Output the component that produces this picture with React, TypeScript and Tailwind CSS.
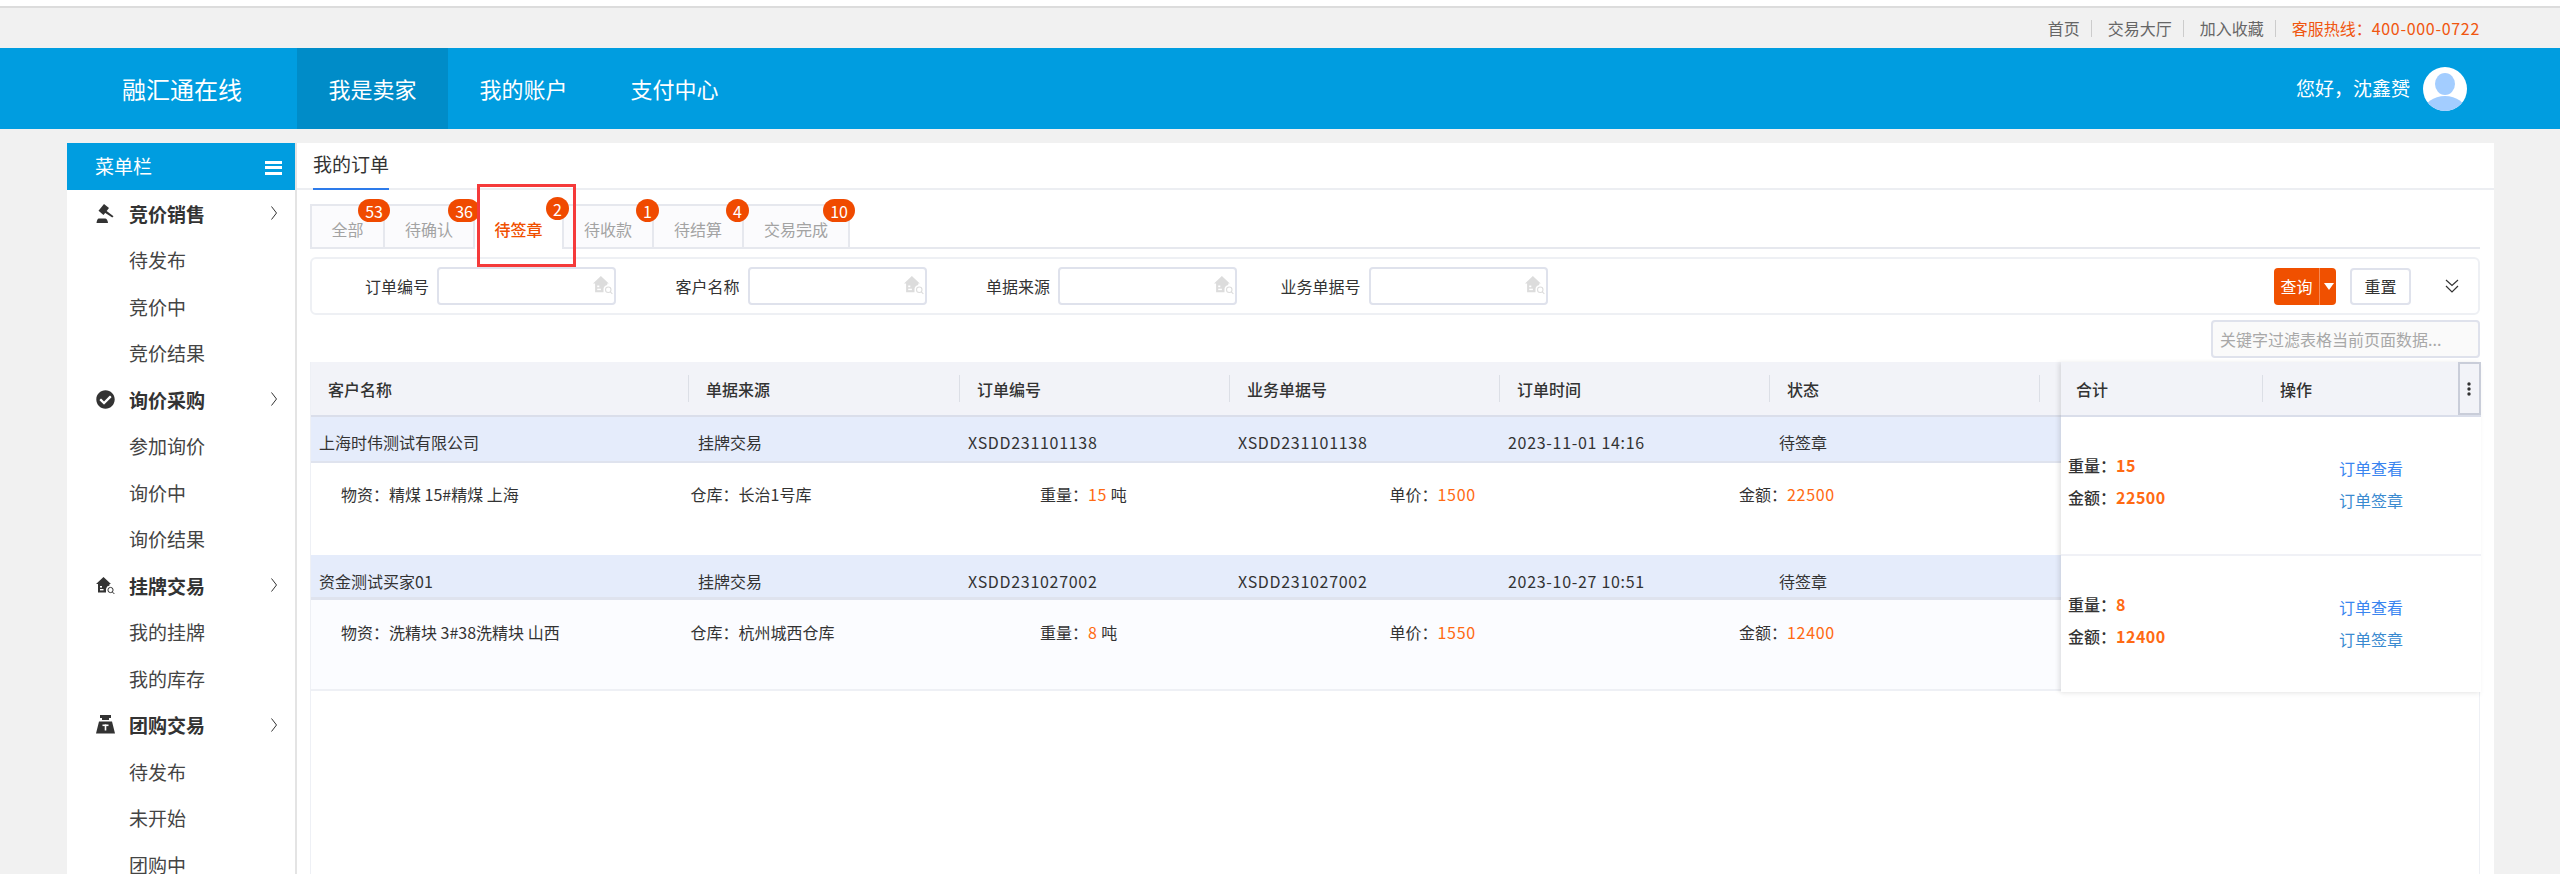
import { FaCheckCircle } from "react-icons/fa";

const menu = [
  { title: "竞价销售", icon: "gavel", items: ["待发布", "竞价中", "竞价结果"] },
  { title: "询价采购", icon: "check", items: ["参加询价", "询价中", "询价结果"] },
  { title: "挂牌交易", icon: "house", items: ["我的挂牌", "我的库存"] },
  { title: "团购交易", icon: "weight", items: ["待发布", "未开始", "团购中"] },
];

const tabs = [
  { label: "全部", count: "53", w: "w-[75px]" },
  { label: "待确认", count: "36", w: "w-[90px]" },
  { label: "待签章", count: "2", w: "w-[89px]", active: true },
  { label: "待收款", count: "1", w: "w-[90px]" },
  { label: "待结算", count: "4", w: "w-[90px]" },
  { label: "交易完成", count: "10", w: "w-[106px]" },
];

const filters = [
  { label: "订单编号" },
  { label: "客户名称" },
  { label: "单据来源" },
  { label: "业务单据号" },
];

const columns = ["客户名称", "单据来源", "订单编号", "业务单据号", "订单时间", "状态", ""];

const orders = [
  {
    customer: "上海时伟测试有限公司",
    no: "XSDD231101138",
    time: "2023-11-01 14:16",
    goods: "精煤 15#精煤 上海",
    store: "长治1号库",
    weight: "15",
    price: "1500",
    amount: "22500",
    head: "h-[46px] pt-[6px] border-b-2",
    body: "h-[92px] pt-[19px] bg-white",
  },
  {
    customer: "资金测试买家01",
    no: "XSDD231027002",
    time: "2023-10-27 10:51",
    goods: "洗精块 3#38洗精块 山西",
    store: "杭州城西仓库",
    weight: "8",
    price: "1550",
    amount: "12400",
    head: "h-[45px] pt-[9px] border-b-[3px]",
    body: "h-[91px] pt-[20px] bg-[#fbfcff] border-b-2 border-[#eef0f5]",
  },
];

function HouseSearch({ color, className }: { color: string; className: string }) {
  return (
    <svg viewBox="0 0 19 19" className={className} fill={color}>
      <path d="M7.5 1 L15 8 L13.5 8 L13.5 9.6 A4.2 4.2 0 0 0 10 13 L10 16.5 L2 16.5 L2 8 L0 8 Z" />
      <rect x="4" y="10" width="2" height="1.6" fill="#fff" />
      <rect x="4" y="13" width="3.5" height="1.4" fill="#fff" />
      <circle cx="14.5" cy="14" r="2.6" fill="none" stroke={color} strokeWidth="1" />
      <path d="M16.4 16 L18.4 18" stroke={color} strokeWidth="1" />
    </svg>
  );
}

function MenuIcon({ name }: { name: string }) {
  if (name === "gavel")
    return (
      <svg viewBox="0 0 19 19" className="h-[19px] w-[19px]" fill="#333">
        <path d="M8 0 L13 4 L7.5 11 L2.5 6.8 Z" />
        <path d="M10 6.6 L17.5 12.2 L16.3 13.6 L8.6 8.6 Z" />
        <path d="M2.5 14.5 H9.5 Q11.5 15 12 19 H0.5 Q1 15 2.5 14.5 Z" />
      </svg>
    );
  if (name === "check") return <FaCheckCircle className="h-[19px] w-[19px] text-[#333]" />;
  if (name === "house") return <HouseSearch color="#333" className="h-[19px] w-[19px]" />;
  return (
    <svg viewBox="0 0 19 19" className="h-[19px] w-[19px]" fill="#333">
      <path d="M4 0 H15 V3 H13 V5 H6 V3 H4 Z" />
      <path d="M3 6.5 H16 L19 18.5 H0 Z" />
      <rect x="6.5" y="9.5" width="6" height="1.6" fill="#fff" />
      <rect x="8.7" y="9.5" width="1.6" height="6" fill="#fff" />
    </svg>
  );
}

function Chevron() {
  return (
    <svg viewBox="0 0 6 14" className="h-[14px] w-[6px]" fill="none" stroke="#333" strokeWidth="1">
      <path d="M0.5 0.5 L5.5 7 L0.5 13.5" />
    </svg>
  );
}

export default function App() {
  return (
    <div
      className="h-[874px] w-[2560px] overflow-hidden bg-[#f1f1f1] text-[16px] text-[#333] relative"
      style={{ fontFamily: '"Noto Sans CJK SC", "Noto Sans", sans-serif' }}
    >
      <div className="h-[6px] bg-white" />
      <div className="h-[2px] bg-[#dcdcdc]" />

      {/* top links */}
      <div className="flex h-[40px] items-center justify-end pr-[80px] text-[#666]">
        <span>首页</span>
        <span className="ml-[11px] mr-[16px] h-[17px] w-px bg-[#ccc]" />
        <span>交易大厅</span>
        <span className="ml-[11px] mr-[16px] h-[17px] w-px bg-[#ccc]" />
        <span>加入收藏</span>
        <span className="ml-[11px] mr-[16px] h-[17px] w-px bg-[#ccc]" />
        <span className="text-[#f0560f]">
          客服热线：<span className="tracking-[0.7px]">400-000-0722</span>
        </span>
      </div>

      {/* blue header */}
      <div className="flex h-[81px] items-center bg-[#009de0] text-white">
        <div className="w-[297px] pl-[122px] text-[24px]">融汇通在线</div>
        <div className="flex h-full w-[151px] items-center justify-center bg-[#008cc8] text-[22px]">我是卖家</div>
        <div className="flex h-full w-[151px] items-center justify-center text-[22px]">我的账户</div>
        <div className="flex h-full w-[151px] items-center justify-center text-[22px]">支付中心</div>
        <div className="ml-auto flex items-center pr-[93px]">
          <span className="mr-[13px] text-[19px]">您好，沈鑫赟</span>
          <svg viewBox="0 0 44 44" className="h-[44px] w-[44px]">
            <clipPath id="avatar">
              <circle cx="22" cy="22" r="22" />
            </clipPath>
            <g clipPath="url(#avatar)">
              <rect width="44" height="44" fill="#fff" />
              <ellipse cx="22" cy="17" rx="10" ry="11" fill="#a3cdff" />
              <ellipse cx="22" cy="44" rx="21" ry="15" fill="#a3cdff" />
            </g>
          </svg>
        </div>
      </div>

      <div className="ml-[67px] mt-[14px] flex h-[731px] w-[2427px] overflow-hidden">
        {/* sidebar */}
        <div className="w-[230px] shrink-0 border-r-2 border-[#e4e4e4] bg-white">
          <div className="flex h-[47px] items-center justify-between bg-[#009de0] pl-[28px] pr-[13px] text-[19px] text-white">
            <span>菜单栏</span>
            <span className="mt-[2px] flex h-[14px] w-[17px] flex-col justify-between">
              <span className="h-[3px] bg-white" />
              <span className="h-[3px] bg-white" />
              <span className="h-[3px] bg-white" />
            </span>
          </div>
          {menu.map((group) => (
            <div key={group.title}>
              <div className="flex h-[46.5px] items-center pl-[29px] pr-[18px]">
                <MenuIcon name={group.icon} />
                <span className="ml-[14px] flex-1 pt-[1px] text-[19px] font-bold text-[#333]">{group.title}</span>
                <Chevron />
              </div>
              {group.items.map((item) => (
                <div key={item} className="flex h-[46.5px] items-center pl-[62px] pt-[1px] text-[19px] text-[#444]">
                  {item}
                </div>
              ))}
            </div>
          ))}
        </div>

        {/* content */}
        <div className="min-w-0 flex-1 bg-white">
          <div className="h-[47px] border-b-2 border-[#eceef2] pl-[16px]">
            <div className="flex h-[47px] w-[76px] items-center border-b-[2px] border-[#2d7bea] pb-[2px] text-[19px] whitespace-nowrap">
              我的订单
            </div>
          </div>

          <div className="ml-[13px] mr-[14px]">
            {/* tabs */}
            <div className="mt-[14px] flex h-[45px] border-b-2 border-[#e6e8ee]">
              {tabs.map((tab) => (
                <div
                  key={tab.label}
                  className={`relative flex h-[45px] items-center justify-center border-r-2 border-[#e6e8ee] pt-[5px] ${tab.w} ${
                    tab.active
                      ? "bg-white font-medium text-[#f05000]"
                      : "border-t-2 border-b-2 bg-[#fbfbfd] text-[#a3a3a3] first:border-l-2"
                  }`}
                >
                  {tab.label}
                  <span className="absolute right-[-7px] top-[-7px] z-10 flex h-[23px] min-w-[23px] items-center justify-center rounded-full bg-[#f04a00] px-[7px] font-normal leading-none text-white">
                    {tab.count}
                  </span>
                </div>
              ))}
            </div>

            {/* filter */}
            <div className="mt-[8px] flex h-[58px] items-center rounded-md border-2 border-[#eef0f4] pr-[19px]">
              {filters.map((f) => (
                <div key={f.label} className="flex w-[310.5px] shrink-0 items-center">
                  <span className="w-[117px] shrink-0 text-right">{f.label}</span>
                  <div className="relative ml-[8px] h-[38px] w-[179px] rounded border-2 border-[#dfe2ec] bg-white">
                    <HouseSearch color="#dcdcdc" className="absolute right-[1px] top-[6px] h-[20px] w-[20px]" />
                  </div>
                </div>
              ))}
              <div className="ml-auto flex items-center">
                <div className="flex h-[37px] w-[62px] items-center rounded bg-[#f05000] text-white">
                  <span className="w-[45px] text-center">查询</span>
                  <span className="h-full w-px bg-[#f78a55]" />
                  <svg viewBox="0 0 10 7" className="ml-[4px] h-[7px] w-[10px]" fill="#fff">
                    <path d="M0 0 H10 L5 7 Z" />
                  </svg>
                </div>
                <div className="ml-[14px] flex h-[37px] w-[61px] items-center justify-center rounded border-2 border-[#dfe2ec]">
                  重置
                </div>
                <svg viewBox="0 0 14 14" className="ml-[34px] h-[14px] w-[14px]" fill="none" stroke="#333" strokeWidth="1.2">
                  <path d="M1 1 L7 6.5 L13 1" />
                  <path d="M1 7 L7 13 L13 7" />
                </svg>
              </div>
            </div>

            {/* keyword filter */}
            <div className="mt-[5px] flex justify-end">
              <div className="flex h-[38px] w-[269px] items-center rounded border-2 border-[#dfe2ec] bg-[#fafafa] pl-[7px] text-[#a8a8a8] whitespace-nowrap">
                关键字过滤表格当前页面数据...
              </div>
            </div>

            {/* table */}
            <div className="mt-[4px] flex h-[520px] w-[2170px] border-x border-[#eef0f5]">
              <div className="w-[1750px] shrink-0">
                <div className="grid h-[55px] grid-cols-[378px_271px_270px_270px_270px_270px_21px] border-b-2 border-[#dadeea] bg-[#f2f3f8] font-medium">
                  {columns.map((c, i) => (
                    <div key={i} className="flex items-center">
                      <span className="flex-1 pl-[17px]">{c}</span>
                      {i < 6 && <span className="h-[27px] w-px bg-[#dcdfe6]" />}
                    </div>
                  ))}
                </div>
                {orders.map((o) => (
                  <div key={o.no}>
                    <div
                      className={`grid grid-cols-[378px_271px_270px_270px_270px_270px_21px] items-center border-[#dfe3ee] bg-[#e5ecfb] ${o.head}`}
                    >
                      <span className="pl-[8px]">{o.customer}</span>
                      <span className="pl-[9px]">挂牌交易</span>
                      <span className="pl-[8px] tracking-[0.7px]">{o.no}</span>
                      <span className="pl-[8px] tracking-[0.7px]">{o.no}</span>
                      <span className="pl-[8px] tracking-[0.7px]">{o.time}</span>
                      <span className="pl-[9px]">待签章</span>
                    </div>
                    <div className={`grid grid-cols-[repeat(5,349.5px)] content-start pl-[30px] ${o.body}`}>
                      <span>物资：{o.goods}</span>
                      <span>仓库：{o.store}</span>
                      <span>
                        重量：<span className="tracking-[0.7px] text-[#ff6a13]">{o.weight}</span> 吨
                      </span>
                      <span>
                        单价：<span className="tracking-[0.7px] text-[#ff6a13]">{o.price}</span>
                      </span>
                      <span>
                        金额：<span className="tracking-[0.7px] text-[#ff6a13]">{o.amount}</span>
                      </span>
                    </div>
                  </div>
                ))}
              </div>

              {/* fixed columns */}
              <div className="w-[420px] shrink-0">
                <div className="relative z-10 shadow-[-3px_0_4px_rgba(0,0,0,0.08),0_3px_4px_rgba(0,0,0,0.04)]">
                  <div className="grid h-[55px] grid-cols-[202px_195px_23px] border-b-2 border-[#dadeea] bg-[#f2f3f8] font-medium">
                    <div className="flex items-center">
                      <span className="flex-1 pl-[15px]">合计</span>
                      <span className="h-[27px] w-px bg-[#dcdfe6]" />
                    </div>
                    <div className="flex items-center pl-[17px]">操作</div>
                    <div className="flex items-center justify-center border-2 border-[#c9cdd9] pr-[2px]">
                      <svg viewBox="0 0 4 14" className="h-[14px] w-[4px]" fill="#333">
                        <circle cx="2" cy="2" r="1.7" />
                        <circle cx="2" cy="7" r="1.7" />
                        <circle cx="2" cy="12" r="1.7" />
                      </svg>
                    </div>
                  </div>
                  {orders.map((o, i) => (
                    <div
                      key={o.no}
                      className={`flex bg-white ${i === 0 ? "h-[139px] border-b-2 border-[#f0f1f6]" : "h-[136px]"}`}
                    >
                      <div className="w-[278px] pl-[7px] pt-[32px] font-medium leading-[32px]">
                        <div>
                          重量：<span className="font-bold tracking-[0.5px] text-[#ff6a13]">{o.weight}</span>
                        </div>
                        <div>
                          金额：<span className="font-bold tracking-[0.5px] text-[#ff6a13]">{o.amount}</span>
                        </div>
                      </div>
                      <div className="pt-[35px] leading-[32px]">
                        <div className="text-[#3a85f0]">订单查看</div>
                        <div className="text-[#3a8ad0]">订单签章</div>
                      </div>
                    </div>
                  ))}
                </div>
              </div>
            </div>
          </div>
        </div>
      </div>

      {/* red callout around the active tab */}
      <div className="absolute left-[477px] top-[184px] z-20 h-[83px] w-[99px] border-[3px] border-[#f53a3a]" />
    </div>
  );
}
